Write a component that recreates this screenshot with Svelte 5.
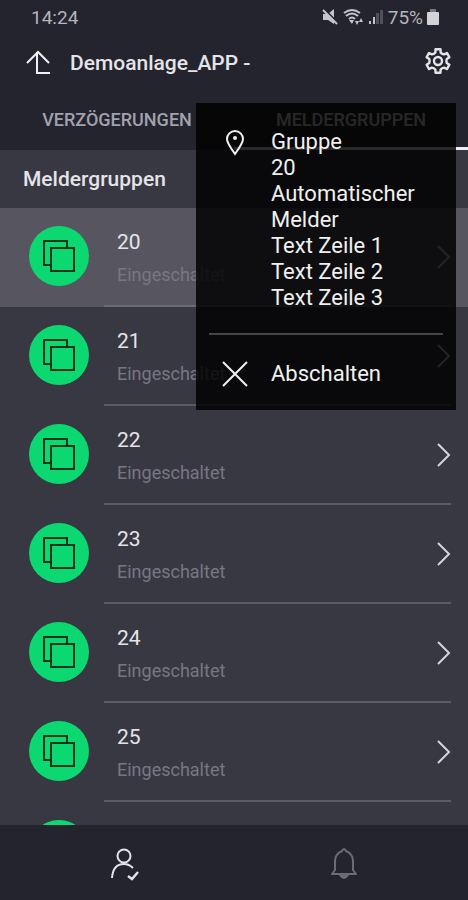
<script lang="ts">
    interface Group {
        id: number;
        status: string;
    }

    let groups: Group[] = [20, 21, 22, 23, 24, 25, 26].map((id) => ({
        id,
        status: "Eingeschaltet",
    }));
    let selected = 20;

    let details: string[] = [
        "Gruppe",
        "20",
        "Automatischer",
        "Melder",
        "Text Zeile 1",
        "Text Zeile 2",
        "Text Zeile 3",
    ];

    const gearPath = generateGear(6, 12, 9);

    // Closed outline with flat teeth and curved notches between them
    function generateGear(teeth: number, outer: number, inner: number): string {
        const point = (r: number, deg: number) => {
            const a = ((deg - 90) * Math.PI) / 180;
            return `${(14 + r * Math.cos(a)).toFixed(2)} ${(14 + r * Math.sin(a)).toFixed(2)}`;
        };

        const step = 360 / teeth;
        let path = "";

        for (let i = 0; i < teeth; i++) {
            const mid = i * step;
            path += `${i === 0 ? "M" : "L"} ${point(outer, mid - 12)} L ${point(outer, mid + 12)}`;
            path += ` L ${point(inner, mid + 17)} Q ${point(inner - 1, mid + step / 2)}, ${point(inner, mid + step - 17)} `;
        }

        return path + "Z";
    }
</script>

<div class="app">
    <header class="header">
        <div class="status-bar">
            <span>14:24</span>
            <div class="status-icons">
                <svg width="18" height="18" viewBox="0 0 18 18">
                    <path d="M2 6h5l6-5v15l-6-4H2z" fill="#c4c4cb" />
                    <path d="M3 1l14 14" stroke="#24242e" stroke-width="2" />
                    <path d="M2 2l14 14" stroke="#c4c4cb" stroke-width="2" />
                </svg>
                <svg width="21" height="18" viewBox="0 0 21 18">
                    <g fill="none" stroke="#c4c4cb" stroke-width="2">
                        <path d="M1 5Q9 -1 17 5" />
                        <path d="M3 8Q9 3 15 8" />
                        <path d="M6 11Q9 8 12 11" />
                    </g>
                    <path d="M6 12h5l-2 4z" fill="#c4c4cb" />
                    <path d="M12 13h4l-2 4zM16 14h4l-2-4z" fill="#c4c4cb" />
                </svg>
                <svg width="16" height="18" viewBox="0 0 16 18">
                    <path d="M1 13h2v3H1zM5 9h2v7H5z" fill="#c4c4cb" />
                    <path d="M8 5h3v11H8zM12 2h3v14h-3z" fill="#50505b" />
                </svg>
                <span class="battery-level">75%</span>
                <svg width="12" height="18" viewBox="0 0 12 18">
                    <path d="M3 1h6v3H3z" fill="#77777f" />
                    <rect x="0" y="4" width="12" height="13" rx="1" fill="#d3d3d7" />
                </svg>
            </div>
        </div>

        <div class="title-bar">
            <button class="icon-button" aria-label="Zurück">
                <svg width="24" height="26" viewBox="0 0 24 26">
                    <path d="M1 13L12 2l11 11M11 2v21h13" fill="none" stroke="#f0f0f2" stroke-width="2" />
                </svg>
            </button>
            <h1 class="title">Demoanlage_APP -</h1>
            <button class="icon-button gear" aria-label="Einstellungen">
                <svg width="28" height="28" viewBox="0 0 28 28" fill="none" stroke="#e4e4e7" stroke-width="2.4">
                    <path d={gearPath} stroke-linejoin="round" />
                    <circle cx="14" cy="14" r="4" />
                </svg>
            </button>
        </div>

        <nav class="tabs">
            <button class="tab">VERZÖGERUNGEN</button>
            <button class="tab active">MELDERGRUPPEN</button>
        </nav>
    </header>

    <h2 class="section-title">Meldergruppen</h2>

    <main class="list">
        {#each groups as group}
            <button class="row" class:selected={group.id === selected}>
                <span class="badge">
                    <svg width="32" height="32" viewBox="0 0 32 32" fill="none" stroke="#06351c" stroke-width="2">
                        <path d="M8 25H1V1h23v7" />
                        <rect x="8" y="8" width="23" height="23" />
                    </svg>
                </span>
                <span class="row-body">
                    <span class="row-text">
                        <span class="row-name">{group.id}</span>
                        <span class="row-status">{group.status}</span>
                    </span>
                    <svg width="14" height="26" viewBox="0 0 14 26">
                        <path d="M1 2l11 11L1 24" fill="none" stroke="#d4d4da" stroke-width="2" />
                    </svg>
                </span>
            </button>
        {/each}
    </main>

    <nav class="bottom-nav">
        <button class="nav-button" aria-label="Benutzer">
            <svg width="30" height="34" viewBox="0 0 30 34" fill="none" stroke="#e4e4e8" stroke-width="2">
                <circle cx="15" cy="9" r="6.5" />
                <path d="M3 31Q4 17 15 17Q20 17 24 21" />
                <path d="M19 29l4 3 6-7" stroke-width="2.4" />
            </svg>
        </button>
        <button class="nav-button" aria-label="Meldungen">
            <svg width="28" height="34" viewBox="0 0 28 34" fill="none" stroke="#6c6c78" stroke-width="2">
                <path d="M2 27L5 23V14Q5 7 12 4Q14 0 16 4Q23 7 23 14V23L26 27Z" stroke-linejoin="round" />
                <path d="M10 28Q14 34 18 28Z" fill="#6c6c78" />
            </svg>
        </button>
    </nav>

    <div class="popup">
        <div class="popup-info">
            <svg width="20" height="28" viewBox="0 0 20 28" fill="none" stroke="#f0f0f0" stroke-width="2">
                <path d="M10 25Q2 14 2 10a8 8 0 0 1 16 0Q18 14 10 25Z" />
                <circle cx="10" cy="9" r="2" fill="#f0f0f0" stroke="none" />
            </svg>
            <div>
                {#each details as line}
                    <div>{line}</div>
                {/each}
            </div>
        </div>
        <button class="popup-action">
            <svg width="28" height="28" viewBox="0 0 28 28">
                <path d="M2 2l24 24M26 2L2 26" stroke="#f0f0f0" stroke-width="2" />
            </svg>
            Abschalten
        </button>
    </div>
</div>

<style>
    :global(body) {
        background: #24242e;
    }

    .app {
        position: relative;
        display: flex;
        flex-direction: column;
        height: 100vh;
        background: #383842;
        color: #e4e4e8;
        font-family: Roboto, sans-serif;
        font-size: 22px;
    }

    button {
        padding: 0;
        border: 0;
        background: none;
        color: inherit;
        font: inherit;
        text-align: left;
    }

    svg {
        display: block;
        flex: none;
    }

    .header {
        background: #24242e;
    }

    .status-bar {
        display: flex;
        justify-content: space-between;
        align-items: center;
        height: 34px;
        padding: 0 29px 0 31px;
        color: #b4b4bc;
        font-size: 19px;
    }

    .status-icons {
        display: flex;
        align-items: center;
        gap: 4px;
    }

    .title-bar {
        display: flex;
        align-items: center;
        height: 58px;
        padding: 0 16px 0 26px;
    }

    .gear {
        padding-bottom: 4px;
    }

    .title {
        flex: 1;
        margin: 0 0 0 20px;
        font-size: 21px;
        font-weight: 500;
    }

    .tabs {
        display: flex;
        height: 58px;
    }

    .tab {
        flex: 1;
        border-bottom: 3px solid transparent;
        color: #a2a2ac;
        font-size: 18px;
        font-weight: 500;
        text-align: center;
    }

    .tab.active {
        border-color: #f0f0f4;
        color: #e4e4e8;
    }

    .section-title {
        margin: 0;
        padding: 0 23px;
        font-size: 21px;
        font-weight: 500;
        line-height: 58px;
    }

    .list {
        flex: 1;
        min-height: 0;
        overflow-y: auto;
        scrollbar-width: none;
    }

    .row {
        display: flex;
        gap: 15px;
        width: 100%;
        height: 99px;
        padding: 0 17px 0 29px;
    }

    .row.selected {
        background: #575660;
    }

    .badge {
        display: flex;
        align-items: center;
        justify-content: center;
        width: 60px;
        height: 60px;
        margin-top: 18px;
        border-radius: 50%;
        background: #0bd870;
    }

    .row-body {
        display: flex;
        flex: 1;
        align-items: center;
        justify-content: space-between;
        align-self: stretch;
        padding-left: 13px;
        border-bottom: 2px solid #5b5b66;
    }

    .row.selected .row-body {
        border-color: #6b6b76;
    }

    .row-text {
        display: flex;
        flex-direction: column;
        gap: 7px;
        padding-top: 4px;
        line-height: 26px;
    }

    .row-name {
        font-size: 21px;
    }

    .row-status {
        color: #777782;
        font-size: 18px;
    }

    .bottom-nav {
        display: flex;
        box-sizing: border-box;
        height: 75px;
        padding: 3px 14px 0;
        background: #24242e;
    }

    .nav-button {
        display: flex;
        flex: 1;
        align-items: center;
        justify-content: center;
    }

    .popup {
        position: absolute;
        top: 103px;
        right: 12px;
        box-sizing: border-box;
        width: 260px;
        padding: 26px 13px 0;
        background: rgba(0, 0, 0, 0.83);
        color: #f0f0f0;
        line-height: 26px;
    }

    .popup-info {
        display: flex;
        gap: 26px;
        padding: 0 16px 22px;
        border-bottom: 2px solid #454547;
    }

    .popup-action {
        display: flex;
        align-items: center;
        gap: 22px;
        width: 100%;
        height: 75px;
        padding: 2px 12px 0;
    }
</style>
